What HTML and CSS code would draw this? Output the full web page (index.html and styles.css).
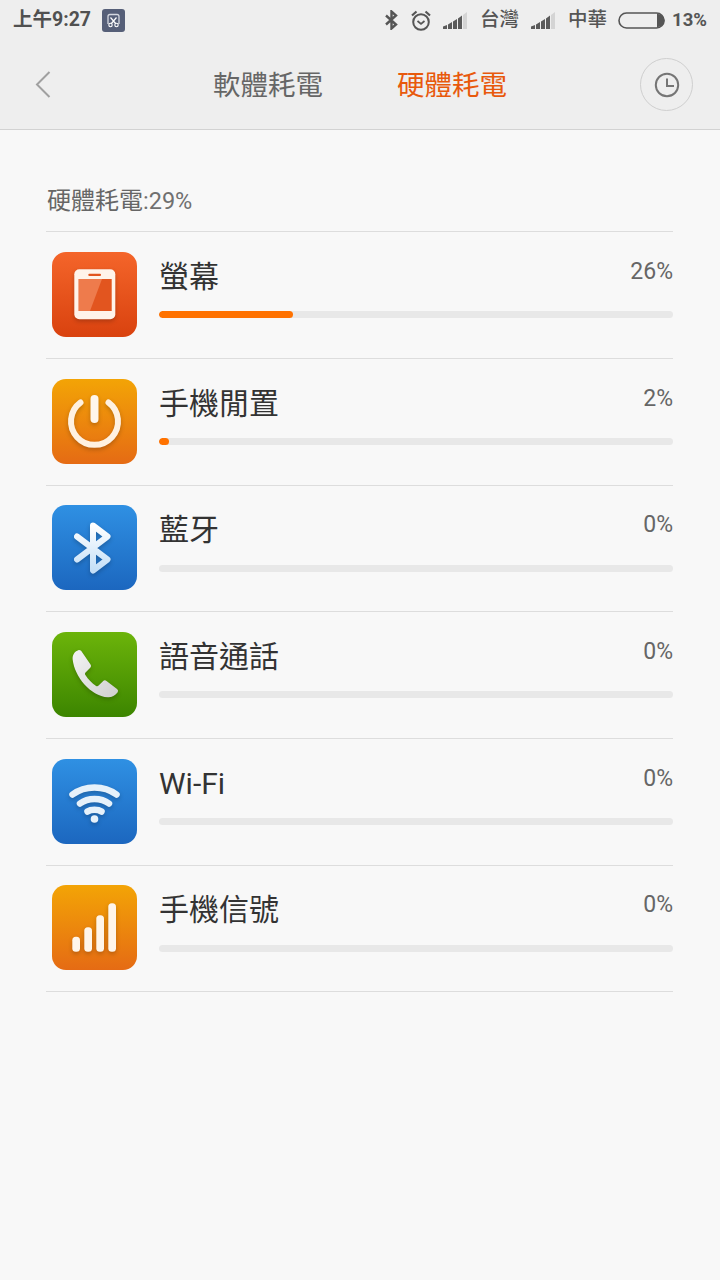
FILE: index.html
```html
<!DOCTYPE html>
<html lang="zh-Hant">
<head>
<meta charset="utf-8">
<title>硬體耗電</title>
<link rel="stylesheet" href="styles.css">
</head>
<body>
<svg class="defs" width="0" height="0" aria-hidden="true">
  <defs>
    <linearGradient id="g-red" x1="0" y1="0" x2="0" y2="1"><stop offset="0" stop-color="#f4652a"/><stop offset="1" stop-color="#d9420f"/></linearGradient>
    <linearGradient id="g-orange" x1="0" y1="0" x2="0" y2="1"><stop offset="0" stop-color="#f3a406"/><stop offset="1" stop-color="#e56b14"/></linearGradient>
    <linearGradient id="g-blue" x1="0" y1="0" x2="0" y2="1"><stop offset="0" stop-color="#2f90e3"/><stop offset="1" stop-color="#1c67bf"/></linearGradient>
    <linearGradient id="g-green" x1="0" y1="0" x2="0" y2="1"><stop offset="0" stop-color="#6cb40a"/><stop offset="1" stop-color="#3c8500"/></linearGradient>
    <linearGradient id="g-ice" x1="0" y1="0" x2="0" y2="1"><stop offset="0" stop-color="#ffffff"/><stop offset="1" stop-color="#c4dff7"/></linearGradient>
    <linearGradient id="g-grey" x1="0" y1="0" x2="1" y2="1"><stop offset="0" stop-color="#f4f4f4"/><stop offset="1" stop-color="#cfcfcf"/></linearGradient>
  </defs>
</svg>

<header class="top">
  <div class="status">
    <div class="status-left">
      <span class="time">上午9:27</span>
      <svg class="shot" width="23" height="23" viewBox="0 0 23 23">
        <rect width="23" height="23" rx="3" fill="#565f78"/>
        <path d="M6 15V7.500A2 2 0 0 1 8 5.500h7a2 2 0 0 1 2 2V15" fill="none" stroke="#d5d8e0" stroke-width="1.300"/>
        <path d="M8.500 8.500l6 7M14.500 8.500l-6 7" stroke="#fff" stroke-width="1.200"/>
        <circle cx="8.500" cy="16" r="1.700" fill="#565f78" stroke="#fff" stroke-width="1.100"/>
        <circle cx="14.500" cy="16" r="1.700" fill="#565f78" stroke="#fff" stroke-width="1.100"/>
      </svg>
    </div>
    <div class="status-right">
      <svg class="si si-bt" width="13" height="20" viewBox="0 0 13 20"><path d="M1 5.500l10 9-4.500 4V1.500l4.500 4-10 9" fill="none" stroke="#555" stroke-width="2.400"/></svg>
      <svg class="si si-alarm" width="20" height="21" viewBox="0 0 20 21"><circle cx="10" cy="12" r="7.800" fill="none" stroke="#555" stroke-width="2"/><path d="M6.500 11l3.500 3 3.500-3" fill="none" stroke="#555" stroke-width="1.700"/><path d="M1 5.500l4.500-4M19 5.500l-4.500-4" stroke="#555" stroke-width="2.200"/></svg>
      <svg class="si si-sig" width="24" height="17" viewBox="0 0 24 17"><path d="M0 17v-2.500L4 13v4zM5 17v-4.500L9 10v7zM10 17V9.500L14 7v10zM15 17V6.500L19 3.500V17z" fill="#5a5a5a"/><path d="M20 17V3l4-3v17z" fill="#d4d4d4"/></svg>
      <span class="carrier c1">台灣</span>
      <svg class="si si-sig2" width="24" height="17" viewBox="0 0 24 17"><path d="M0 17v-2.500L4 13v4zM5 17v-4.500L9 10v7zM10 17V9.500L14 7v10zM15 17V6.500L19 3.500V17z" fill="#5a5a5a"/><path d="M20 17V3l4-3v17z" fill="#d4d4d4"/></svg>
      <span class="carrier c2">中華</span>
      <svg class="si si-bat" width="47" height="17" viewBox="0 0 47 17"><rect x="1" y="1" width="45" height="15" rx="7.500" fill="none" stroke="#555" stroke-width="1.600"/><path d="M39 2h1a6.500 6.500 0 0 1 0 13h-1z" fill="#555"/></svg>
      <span class="pct-status">13%</span>
    </div>
  </div>
  <nav class="nav">
    <div class="nav-left">
      <svg width="16" height="27" viewBox="0 0 16 27"><path d="M14.500 1L2 13.500 14.500 26" fill="none" stroke="#a0a0a0" stroke-width="2"/></svg>
    </div>
    <div class="tabs">
      <span class="tab">軟體耗電</span>
      <span class="tab active">硬體耗電</span>
    </div>
    <div class="nav-right">
      <div class="history">
        <svg width="26" height="26" viewBox="0 0 26 26"><circle cx="13" cy="13" r="11.200" fill="none" stroke="#757575" stroke-width="2"/><path d="M13 6.500V14h7" fill="none" stroke="#757575" stroke-width="2"/></svg>
      </div>
    </div>
  </nav>
</header>

<main class="main">
  <p class="summary">硬體耗電<span class="summary-num">:29%</span></p>
  <ul class="list">
    <li class="row">
      <svg class="icon" width="85" height="85" viewBox="0 0 85 85">
        <rect width="85" height="85" rx="14" fill="url(#g-red)"/>
        <g class="glyph">
          <rect x="22.300" y="17.300" width="41" height="50" rx="5" fill="#fff3ea"/>
          <rect x="26.700" y="27" width="33" height="32" fill="#e2551f"/>
          <path d="M26.700 27H50L38 59H26.700z" fill="#ee7b4c"/>
          <rect x="36.300" y="21.700" width="12.700" height="2.200" rx="1" fill="#e2551f"/>
        </g>
      </svg>
      <div class="body">
        <div class="line"><span class="label">螢幕</span><span class="pct">26%</span></div>
        <div class="bar"><div class="fill" style="width:26%"></div></div>
      </div>
    </li>
    <li class="row">
      <svg class="icon" width="85" height="85" viewBox="0 0 85 85">
        <rect width="85" height="85" rx="14" fill="url(#g-orange)"/>
        <g class="glyph">
          <path d="M28.500 23.500a23.500 23.500 0 1 0 28 0" fill="none" stroke="#fff1e0" stroke-width="6" stroke-linecap="round"/>
          <rect x="38.500" y="16" width="8" height="28" rx="4" fill="#fff6ec"/>
        </g>
      </svg>
      <div class="body">
        <div class="line"><span class="label">手機閒置</span><span class="pct">2%</span></div>
        <div class="bar"><div class="fill" style="width:2%"></div></div>
      </div>
    </li>
    <li class="row">
      <svg class="icon" width="85" height="85" viewBox="0 0 85 85">
        <rect width="85" height="85" rx="14" fill="url(#g-blue)"/>
        <g class="glyph">
          <path d="M25 31.500l30.500 23-14.500 11V20.500l14.500 11-30.500 23" fill="none" stroke="url(#g-ice)" stroke-width="6" stroke-linecap="round" stroke-linejoin="round"/>
        </g>
      </svg>
      <div class="body">
        <div class="line"><span class="label">藍牙</span><span class="pct">0%</span></div>
        <div class="bar"></div>
      </div>
    </li>
    <li class="row">
      <svg class="icon" width="85" height="85" viewBox="0 0 85 85">
        <rect width="85" height="85" rx="14" fill="url(#g-green)"/>
        <g class="glyph">
          <path d="M20.700 27.700C20 23 23 19 26.300 18.200c1.700-.4 2.800.4 3.500 1.600l8.700 12.700c.8 1.300.6 2.500-.5 3.500l-4.500 4.500c-.7.800-.7 1.700-.1 2.600 2.800 4.500 6.500 8.200 10.700 10.800.9.500 1.700.4 2.500-.3l4.400-4.400c1-1 2.200-1.200 3.500-.3l10.500 8c1.300 1 1.300 2.300.5 3.500-2.500 3-5.500 5-9.500 4.900C38 64 22.500 44 20.700 27.700z" fill="url(#g-grey)"/>
        </g>
      </svg>
      <div class="body">
        <div class="line"><span class="label">語音通話</span><span class="pct">0%</span></div>
        <div class="bar"></div>
      </div>
    </li>
    <li class="row">
      <svg class="icon" width="85" height="85" viewBox="0 0 85 85">
        <rect width="85" height="85" rx="14" fill="url(#g-blue)"/>
        <g class="glyph" fill="none" stroke="#e6f1fa" stroke-width="6.500" stroke-linecap="round">
          <path d="M20.500 35.500C33 26 52 26 64.500 35.500"/>
          <path d="M28 44.500C36 38.500 49 38.500 57 44.500"/>
          <path d="M35.500 52.500C39 50 46 50 49.500 52.500"/>
          <circle cx="42.500" cy="60" r="3.800" fill="#e6f1fa" stroke="none"/>
        </g>
      </svg>
      <div class="body">
        <div class="line"><span class="label">Wi-Fi</span><span class="pct">0%</span></div>
        <div class="bar"></div>
      </div>
    </li>
    <li class="row">
      <svg class="icon" width="85" height="85" viewBox="0 0 85 85">
        <rect width="85" height="85" rx="14" fill="url(#g-orange)"/>
        <g class="glyph" fill="#fff5ea">
          <rect x="20.300" y="51.700" width="7.700" height="15" rx="3.500"/>
          <rect x="32.300" y="42.300" width="7.700" height="24.400" rx="3.500"/>
          <rect x="44.300" y="30.300" width="7.700" height="36.400" rx="3.500"/>
          <rect x="56.300" y="18.300" width="7.700" height="48.400" rx="3.500"/>
        </g>
      </svg>
      <div class="body">
        <div class="line"><span class="label">手機信號</span><span class="pct">0%</span></div>
        <div class="bar"></div>
      </div>
    </li>
  </ul>
</main>
</body>
</html>
```
FILE: styles.css
```css
* { box-sizing: border-box; }
html, body { margin: 0; padding: 0; }
body {
  width: 720px;
  height: 1280px;
  overflow: hidden;
  background: #f8f8f8;
  font-family: Roboto, "Noto Sans CJK TC", sans-serif;
  color: #333;
}
.defs { position: absolute; }
.top {
  height: 130px;
  background: #eeeeee;
  border-bottom: 1px solid #d2d2d2;
}
.status {
  height: 40px;
  display: flex;
  justify-content: space-between;
  align-items: center;
  padding: 0 13px;
  color: #555;
}
.status-left, .status-right { display: flex; align-items: center; }
.time { font-size: 19.500px; font-weight: 700; line-height: 40px; color: #505050; }
.shot { margin-left: 11px; }
.si { display: block; flex: none; }
.si-alarm { margin-left: 13px; }
.si-sig { margin-left: 12px; }
.carrier { font-size: 19.500px; line-height: 40px; font-weight: 500; }
.c1 { margin-left: 13px; }
.si-sig2 { margin-left: 12px; }
.c2 { margin-left: 13px; }
.si-bat { margin-left: 11px; }
.pct-status { margin-left: 7px; font-size: 18.500px; font-weight: 700; line-height: 40px; }
.nav {
  height: 89px;
  display: grid;
  grid-template-columns: 1fr auto 1fr;
  align-items: center;
}
.nav-left { padding-left: 35px; display: flex; }
.nav-right { display: flex; justify-content: flex-end; padding-right: 27px; }
.tabs { display: flex; gap: 74px; padding-top: 2px; }
.tab { font-size: 27.500px; line-height: 40px; color: #666; width: 110px; white-space: nowrap; }
.tab.active { color: #e8590c; }
.history {
  width: 53px;
  height: 53px;
  border: 1px solid #cfcfcf;
  border-radius: 50%;
  display: flex;
  align-items: center;
  justify-content: center;
}
.main { padding: 0 47px 0 46px; }
.summary {
  margin: 0;
  padding: 55px 0 0 1px;
  font-size: 24px;
  line-height: 33px;
  color: #666;
  height: 101.330px;
}
.summary-num { font-size: 23.500px; color: #707070; }
.list {
  list-style: none;
  margin: 0;
  padding: 0;
  border-top: 1px solid #dddddd;
}
.row {
  height: 126.667px;
  display: flex;
  gap: 22px;
  padding: 19.670px 0 0 6px;
  border-bottom: 1px solid #dddddd;
}
.icon { display: block; flex: none; }
.glyph { filter: drop-shadow(0 2px 2px rgba(0, 0, 0, .22)); }
.body { flex: 1; min-width: 0; padding-top: 59.300px; position: relative; }
.line {
  position: absolute;
  left: 0;
  right: 0;
  top: 1px;
  display: flex;
  justify-content: space-between;
  align-items: flex-start;
}
.label { font-size: 30px; line-height: 48px; color: #333; }
.pct { font-size: 23px; line-height: 38px; color: #666; }
.bar {
  height: 7px;
  border-radius: 4px;
  background: #e8e8e8;
  overflow: hidden;
}
.fill { height: 100%; border-radius: 4px; background: #ff7200; }
```
